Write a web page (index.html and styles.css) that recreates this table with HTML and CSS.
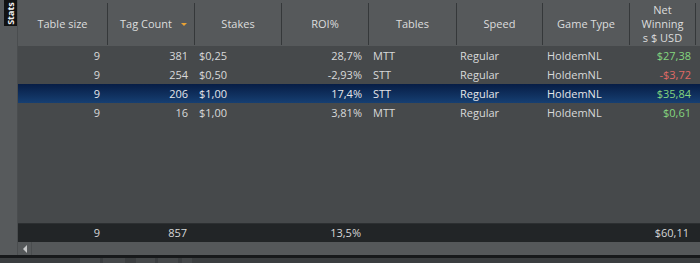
FILE: index.html
```html
<!DOCTYPE html>
<html>
<head>
<meta charset="utf-8">
<link rel="stylesheet" href="styles.css">
</head>
<body>
<div class="app">
  <div class="side">
    <div class="tab"><span>Stats</span></div>
  </div>
  <div class="main">
    <div class="head">
      <div class="hc">Table size</div>
      <div class="hc sorted"><span>Tag Count</span><i class="arrow"></i></div>
      <div class="hc">Stakes</div>
      <div class="hc">ROI%</div>
      <div class="hc">Tables</div>
      <div class="hc">Speed</div>
      <div class="hc">Game Type</div>
      <div class="hc wrap">Net<br>Winning<br>s $ USD</div>
      <div class="hc last"></div>
    </div>
    <div class="rows">
      <div class="row">
        <div class="c r p8">9</div><div class="c r p7">381</div><div class="c l">$0,25</div><div class="c r p7">28,7%</div><div class="c l">MTT</div><div class="c l p3">Regular</div><div class="c l">HoldemNL</div><div class="c r p5 pos">$27,38</div><div class="c"></div>
      </div>
      <div class="row">
        <div class="c r p8">9</div><div class="c r p7">254</div><div class="c l">$0,50</div><div class="c r p7">-2,93%</div><div class="c l">STT</div><div class="c l p3">Regular</div><div class="c l">HoldemNL</div><div class="c r p5 neg">-$3,72</div><div class="c"></div>
      </div>
      <div class="row sel">
        <div class="c r p8">9</div><div class="c r p7">206</div><div class="c l">$1,00</div><div class="c r p7">17,4%</div><div class="c l">STT</div><div class="c l p3">Regular</div><div class="c l">HoldemNL</div><div class="c r p5 pos">$35,84</div><div class="c"></div>
      </div>
      <div class="row">
        <div class="c r p8">9</div><div class="c r p7">16</div><div class="c l">$1,00</div><div class="c r p7">3,81%</div><div class="c l">MTT</div><div class="c l p3">Regular</div><div class="c l">HoldemNL</div><div class="c r p5 pos">$0,61</div><div class="c"></div>
      </div>
    </div>
    <div class="foot">
      <div class="c r p8">9</div><div class="c r p8">857</div><div class="c"></div><div class="c r p8">13,5%</div><div class="c"></div><div class="c"></div><div class="c"></div><div class="c r p7">$60,11</div><div class="c"></div>
    </div>
    <div class="hscroll">
      <div class="sbtn"><i class="larrow"></i></div>
      <div class="strack"></div>
    </div>
  </div>
</div>
<div class="bottom">
  <div class="dark"></div>
  <div class="tabs"><i class="t t1"></i><i class="t t2"></i><i class="t t3"></i><i class="t t4"></i><i class="t t5"></i></div>
</div>
</body>
</html>
```

FILE: styles.css
```css
html, body {
  margin: 0;
  padding: 0;
  width: 700px;
  height: 263px;
  overflow: hidden;
  background: #55585a;
  font-family: "Open Sans", "Noto Sans", sans-serif;
  font-size: 11px;
  color: #d8d9da;
}
.app {
  display: flex;
  height: 255px;
}
.side {
  width: 17px;
  flex: none;
  background: #575a5c;
  border-right: 1px solid #4a4d4f;
}
.tab {
  margin-left: 4px;
  width: 13px;
  height: 26px;
  background: #111213;
  display: flex;
  align-items: center;
  justify-content: center;
}
.tab span {
  transform: rotate(-90deg);
  color: #f2f2f2;
  font-size: 9px;
  font-weight: 700;
  line-height: 1;
  white-space: nowrap;
}
.main {
  flex: 1;
  display: flex;
  flex-direction: column;
  background: #46494b;
  min-width: 0;
}
.head, .row, .foot {
  display: grid;
  grid-template-columns: 90px 87px 87px 87px 88px 86px 87px 66px 4px;
}
.head {
  background: #56595b;
  height: 46px;
  padding: 3px 0;
  box-sizing: border-box;
}
.hc {
  border-right: 1px solid #35383a;
  display: flex;
  align-items: center;
  justify-content: center;
  text-align: center;
  color: #dcdddd;
  line-height: 14px;
}
.hc.last { border-right: none; }
.hc.sorted {
  justify-content: flex-start;
  padding-left: 12px;
}
.arrow {
  margin-left: auto;
  margin-right: 7px;
  width: 0;
  height: 0;
  border-left: 3px solid transparent;
  border-right: 3px solid transparent;
  border-top: 3px solid #e9a234;
}
.hc.wrap {
  padding: 0 2px;
}
.rows {
  flex: 1;
}
.row {
  height: 19px;
  line-height: 19px;
}
.row.sel {
  background: linear-gradient(#071d45, #163f72);
  color: #e4e6ea;
}
.c {
  white-space: nowrap;
  overflow: hidden;
}
.r { text-align: right; }
.l { padding-left: 4px; }
.p3 { padding-left: 3px; }
.p5 { padding-right: 5px; }
.p7 { padding-right: 7px; }
.p8 { padding-right: 8px; }
.pos { color: #84d67f; }
.neg { color: #e06a66; }
.foot {
  height: 18px;
  line-height: 18px;
  background: #222527;
  border-top: 1px solid #2c2f31;
  color: #d6d7d8;
}
.hscroll {
  height: 13px;
  display: flex;
  background: #55585a;
}
.sbtn {
  width: 13px;
  border-right: 1px solid #4a4d4f;
  display: flex;
  align-items: center;
  justify-content: center;
}
.larrow {
  width: 0;
  height: 0;
  border-top: 4px solid transparent;
  border-bottom: 4px solid transparent;
  border-right: 4px solid #c8c9ca;
}
.strack { flex: 1; }
.bottom {
  height: 8px;
  background: #3b3e40;
}
.dark {
  height: 3px;
  background: #17191b;
}
.tabs {
  display: flex;
  height: 5px;
}
.t { display: block; height: 5px; background: #45484a; }
.t1 { margin-left: 80px; width: 20px; }
.t2 { margin-left: 3px; width: 22px; }
.t3 { margin-left: 11px; width: 19px; }
.t4 { margin-left: 3px; width: 20px; }
.t5 { margin-left: 4px; width: 10px; }
```
